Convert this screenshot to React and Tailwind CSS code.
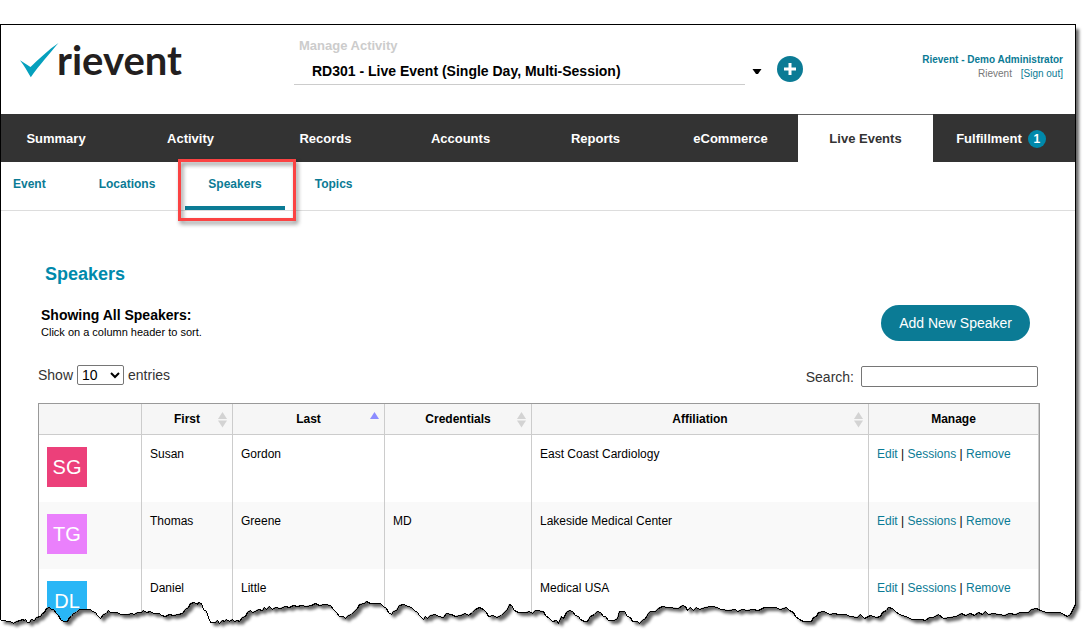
import React from 'react';

const tabs = ['Summary', 'Activity', 'Records', 'Accounts', 'Reports', 'eCommerce', 'Live Events', 'Fulfillment'];

const subTabs = ['Event', 'Locations', 'Speakers', 'Topics'];

const columns = [
  { label: '' },
  { label: 'First', sort: 'both' },
  { label: 'Last', sort: 'asc' },
  { label: 'Credentials', sort: 'both' },
  { label: 'Affiliation', sort: 'both' },
  { label: 'Manage' },
];

const speakers = [
  { initials: 'SG', color: 'bg-[#ec407a]', first: 'Susan', last: 'Gordon', credentials: '', affiliation: 'East Coast Cardiology' },
  { initials: 'TG', color: 'bg-[#ea80fc]', first: 'Thomas', last: 'Greene', credentials: 'MD', affiliation: 'Lakeside Medical Center' },
  { initials: 'DL', color: 'bg-[#29b6f6]', first: 'Daniel', last: 'Little', credentials: '', affiliation: 'Medical USA' },
];

// Torn paper outline, left to right
const tear =
  '0,619 5,619 6,620 10,620 13,622 16,620 20,619 22,618 24,619 25,618 27,621 29,621 31,618 34,619 36,616 40,615 42,612 44,611 46,607 49,606 ' +
  '51,608 53,608 56,612 58,614 60,618 63,620 67,620 69,616 71,615 73,612 76,611 79,608 90,608 92,610 95,611 97,614 100,617 103,613 106,612 108,609 110,611 117,611 ' +
  '120,613 128,613 131,612 134,613 137,611 141,611 143,609 146,611 150,610 153,612 159,612 161,614 165,615 169,613 173,614 178,613 182,612 185,608 188,606 190,602 ' +
  '194,601 197,603 198,601 201,602 203,608 206,610 208,616 210,621 215,621 217,619 219,622 222,619 224,620 226,618 229,620 232,618 234,620 237,619 239,620 242,616 ' +
  '245,615 247,611 250,609 252,611 255,610 258,608 262,609 264,606 266,608 269,605 272,608 275,606 280,607 285,605 289,606 293,604 297,605 301,604 306,605 311,604 315,602 ' +
  '319,604 325,603 330,604 333,608 336,611 339,615 343,615 345,617 348,614 351,613 354,610 357,607 359,603 364,602 366,600 370,602 380,602 383,605 386,607 388,611 ' +
  '391,613 393,610 396,609 399,604 403,603 408,605 411,606 414,609 417,611 419,614 423,618 425,615 427,617 430,614 435,613 438,615 443,616 446,612 451,613 455,615 ' +
  '460,614 465,612 468,614 472,611 475,608 479,606 483,608 486,611 488,615 493,614 496,616 501,614 504,611 507,608 509,603 511,604 514,609 518,611 526,611 529,610 532,612 ' +
  '535,609 543,610 545,614 549,617 552,620 556,619 558,622 561,615 563,617 566,611 569,609 572,610 575,614 578,615 580,618 584,620 587,620 590,615 594,613 597,610 600,611 ' +
  '603,615 605,615 608,619 614,619 617,617 619,610 624,610 627,615 630,616 632,620 637,620 639,622 642,619 645,617 648,612 650,610 655,610 658,607 662,605 667,606 ' +
  '678,607 682,604 685,605 687,609 690,606 693,609 696,606 699,608 705,606 711,605 717,606 720,608 728,609 735,608 737,610 742,608 747,609 752,608 758,609 764,606 ' +
  '775,606 780,608 786,606 789,609 793,611 795,615 799,618 803,620 811,620 813,616 816,615 818,611 824,610 829,613 834,612 838,613 845,613 850,615 857,616 860,613 ' +
  '864,617 870,614 876,616 880,615 882,611 886,609 888,606 892,607 895,610 899,613 905,615 912,618 921,618 925,619 929,616 933,616 938,613 943,617 950,616 956,615 961,612 ' +
  '965,614 970,612 974,614 978,611 982,613 985,610 988,613 993,612 1004,614 1009,612 1015,613 1020,611 1028,611 1031,608 1036,607 1040,609 1046,611 1060,611 1063,613 ' +
  '1067,615 1070,613 1073,607 1075,603 1075,580';

function Logo() {
  return (
    <a href="#home" aria-label="rievent" className="flex w-[293px] shrink-0 items-start pl-[18px] pt-[9px]">
      <svg viewBox="0 0 40 36" className="mt-2 h-9 w-10" aria-hidden="true">
        <path d="M1 18.300 L11.500 25 C20 17 29 8 39.500 1 C31 11 20 23.500 11.800 35.300 C8.500 29.500 5 23.500 1 18.300Z" fill="#05a0bd" />
      </svg>
      <span className="-ml-0.5 font-['Lato',sans-serif] text-[40px] font-bold leading-[52px] text-[#231f20]">rievent</span>
    </a>
  );
}

function SortIcon({ sort }) {
  return (
    <svg viewBox="0 0 9 16" width="9" height="16" className="absolute right-[5px] top-2" aria-hidden="true">
      <path d="M4.500 0 L9 7 H0Z" fill={sort === 'asc' ? '#8c8cff' : '#d3d3d3'} />
      {sort === 'both' && <path d="M0 8.500 H9 L4.500 15.500Z" fill="#d3d3d3" />}
    </svg>
  );
}

function Header() {
  return (
    <header className="flex h-[89px] items-start">
      <Logo />
      <div className="w-[451px] pt-[13px]">
        <label htmlFor="activity" className="block pl-[5px] text-[13px] font-bold leading-4 text-[#ccc]">
          Manage Activity
        </label>
        <select
          id="activity"
          className="mt-[3px] block h-7 w-full appearance-none border-b border-[#ccc] bg-transparent pl-[18px] text-sm font-bold text-black"
        >
          <option>RD301 - Live Event (Single Day, Multi-Session)</option>
        </select>
      </div>
      <svg viewBox="0 0 10 5" className="ml-[7px] mt-11 h-[5px] w-[10px]" aria-hidden="true">
        <path d="M0.500 0 H9.500 L6 5 H4Z" fill="#000" />
      </svg>
      <button
        type="button"
        aria-label="Add activity"
        className="ml-[15px] mt-[31px] flex h-[26px] w-[26px] shrink-0 items-center justify-center rounded-full bg-[#0b7b95]"
      >
        <svg viewBox="0 0 12 12" className="h-3 w-3" aria-hidden="true">
          <path d="M6 0 V12 M0 6 H12" stroke="#fff" strokeWidth="3" />
        </svg>
      </button>
      <div className="ml-auto pr-3 pt-7 text-right text-[10px] leading-[14px]">
        <p className="font-bold text-[#0b7b95]">Rievent - Demo Administrator</p>
        <p className="text-[#777]">
          Rievent <a href="#signout" className="ml-1.5 text-[#0b7b95]">[Sign out]</a>
        </p>
      </div>
    </header>
  );
}

function MainNav() {
  return (
    <nav className="grid h-12 grid-cols-[122fr_135fr_135fr_135fr_135fr_135fr_135fr_142fr] bg-[#333] text-[13px] font-bold text-white">
      {tabs.map((tab) => (
        <a
          key={tab}
          href={`#${tab}`}
          className={`flex items-center justify-center border-t first:pr-3 last:pr-1.5 ${
            tab === 'Live Events' ? 'border-[#666] bg-white text-[#333]' : 'border-[#333]'
          }`}
        >
          {tab}
          {tab === 'Fulfillment' && (
            <span className="ml-1.5 flex h-[18px] w-[18px] items-center justify-center rounded-full bg-[#0089ab] text-xs">1</span>
          )}
        </a>
      ))}
    </nav>
  );
}

function SubNav() {
  return (
    <nav className="flex h-[49px] gap-[7px] border-b border-[#ddd] text-xs font-bold text-[#0b7b95]">
      {subTabs.map((tab) => {
        const active = tab === 'Speakers';
        return (
          <a
            key={tab}
            href={`#${tab}`}
            className={`relative px-[23px] pt-[14px] leading-4 first:pl-3 ${active ? 'border-b-4 border-[#0b7b95]' : ''}`}
          >
            {tab}
            {/* Highlight frame */}
            {active && (
              <span className="absolute -left-[7px] -right-[11px] -top-[3px] -bottom-[15px] border-3 border-[#fb4343] drop-shadow-[2px_3px_2px_rgba(0,0,0,0.45)]" />
            )}
          </a>
        );
      })}
    </nav>
  );
}

function SpeakersTable() {
  return (
    <table className="mt-4 w-full table-fixed border-separate border-spacing-0 border border-[#999] text-xs leading-[14px] text-black">
      <colgroup>
        <col className="w-[103px]" />
        <col className="w-[91px]" />
        <col className="w-[152px]" />
        <col className="w-[147px]" />
        <col />
        <col className="w-[170px]" />
      </colgroup>
      <thead>
        <tr className="h-[31px] bg-[#f6f6f6]">
          {columns.map(({ label, sort }) => (
            <th key={label} className="relative border-b border-r border-[#ccc] font-bold">
              {label}
              {sort && <SortIcon sort={sort} />}
            </th>
          ))}
        </tr>
      </thead>
      <tbody>
        {speakers.map((s) => (
          <tr key={s.initials} className="h-[67px] align-top even:bg-[#f9f9f9] *:border-r *:border-[#ccc] *:pl-2 *:pt-3">
            <td>
              <div className={`flex h-10 w-10 items-center justify-center text-xl text-white ${s.color}`}>{s.initials}</div>
            </td>
            <td>{s.first}</td>
            <td>{s.last}</td>
            <td>{s.credentials}</td>
            <td>{s.affiliation}</td>
            <td>
              <a href="#edit" className="text-[#0b7b95]">Edit</a> | <a href="#sessions" className="text-[#0b7b95]">Sessions</a> |{' '}
              <a href="#remove" className="text-[#0b7b95]">Remove</a>
            </td>
          </tr>
        ))}
      </tbody>
    </table>
  );
}

function TornEdge() {
  return (
    <svg
      viewBox="0 590 1085 53"
      preserveAspectRatio="none"
      className="pointer-events-none absolute bottom-0 left-0 h-[53px] w-full"
      aria-hidden="true"
    >
      <defs>
        <clipPath id="below">
          <polygon points={`${tear} 1095,580 1095,660 -10,660 -10,619`} />
        </clipPath>
        <filter id="soft" x="-5%" y="-30%" width="110%" height="160%">
          <feGaussianBlur stdDeviation="1.8" />
        </filter>
      </defs>
      <g clipPath="url(#below)">
        <rect x="-10" y="580" width="1110" height="80" fill="#fff" />
        <polygon points={`4,560 ${tear} 1075,560`} transform="translate(4 4)" fill="#000" opacity="0.6" filter="url(#soft)" />
      </g>
      <polyline points={tear} transform="translate(0.5 0.5)" fill="none" stroke="#000" strokeWidth="1" shapeRendering="crispEdges" />
    </svg>
  );
}

export default function App() {
  return (
    <div className="relative overflow-hidden bg-white pr-[9px] pt-6 font-['Liberation_Sans',Arial,sans-serif]">
      <div className="border-x border-t border-black bg-white pb-[7px] shadow-[3px_5px_3px_rgba(0,0,0,0.6)]">
        <Header />
        <MainNav />
        <SubNav />

        <main className="pl-[37px] pr-[35px] pt-[51px]">
          <h2 className="pl-[7px] text-lg font-bold leading-6 text-[#0089ab]">Speakers</h2>

          <div className="mt-[19px] flex items-start justify-between pl-[3px] pr-[10px] text-black">
            <div className="pt-0.5">
              <h3 className="text-sm font-bold leading-4">Showing All Speakers:</h3>
              <p className="mt-px text-[11px] leading-4">Click on a column header to sort.</p>
            </div>
            <button type="button" className="h-9 rounded-full bg-[#0b7b95] px-[18px] text-sm text-white">
              Add New Speaker
            </button>
          </div>

          <div className="mt-6 flex items-end justify-between text-sm text-[#333]">
            <label className="flex items-center gap-1 self-start">
              Show
              <select className="h-5 w-[47px] rounded-xs border border-[#767676] bg-white text-sm leading-none text-black">
                <option>10</option>
                <option>25</option>
                <option>50</option>
              </select>
              entries
            </label>
            <label className="flex h-[22px] items-end gap-[7px] pr-0.5">
              Search:
              <input type="search" className="h-[21px] w-[177px] rounded-xs border border-[#767676] bg-white px-1 text-black" />
            </label>
          </div>

          <SpeakersTable />
        </main>
      </div>
      <TornEdge />
    </div>
  );
}
